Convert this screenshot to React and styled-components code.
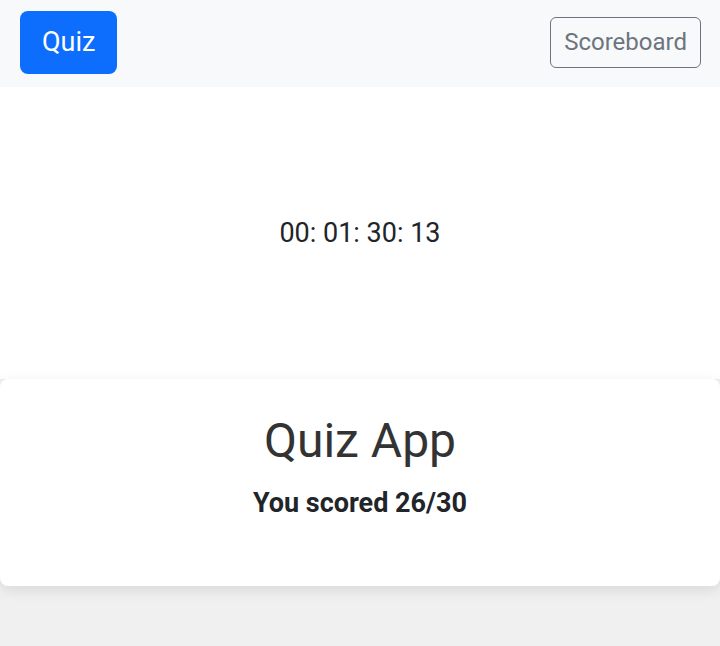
import React from "react";
import styled, { createGlobalStyle } from "styled-components";

const GlobalStyle = createGlobalStyle`
  html, body {
    margin: 0;
    padding: 0;
    background: #f0f0f0;
    font-family: Roboto, "Liberation Sans", sans-serif;
    color: #212529;
  }
  * {
    box-sizing: border-box;
  }
`;

const Navbar = styled.nav`
  display: flex;
  align-items: center;
  justify-content: space-between;
  height: 87px;
  padding: 0 19px 2px 20px;
  background: #f8f9fa;
`;

const Brand = styled.button`
  background: #0d6efd;
  color: #fff;
  border: none;
  border-radius: 8px;
  font-family: inherit;
  font-size: 27px;
  line-height: 39px;
  padding: 12px 22px;
  cursor: pointer;
`;

const OutlineButton = styled.button`
  background: transparent;
  color: #6c757d;
  border: 1px solid #6c757d;
  border-radius: 6px;
  font-family: inherit;
  font-size: 24px;
  line-height: 35px;
  padding: 7px 13px;
  cursor: pointer;
`;

const TimerSection = styled.section`
  display: flex;
  align-items: center;
  justify-content: center;
  height: 292px;
  background: #fff;
`;

const Timer = styled.div`
  font-size: 27px;
  line-height: 32px;
  color: #212529;
`;

const Card = styled.div`
  background: #fff;
  border-radius: 8px;
  box-shadow: 0 4px 14px rgba(0, 0, 0, 0.1);
  padding: 33px 20px 66px;
  text-align: center;
`;

const Title = styled.h1`
  margin: 0 0 16px;
  font-size: 48px;
  line-height: 58px;
  font-weight: 400;
  color: #333;
`;

const Score = styled.h2`
  margin: 0;
  font-size: 27px;
  line-height: 34px;
  font-weight: 700;
  color: #212529;
`;

const Footer = styled.div`
  height: 60px;
`;

const App = () => {
  return (
    <>
      <GlobalStyle />
      <Navbar>
        <Brand>Quiz</Brand>
        <OutlineButton>Scoreboard</OutlineButton>
      </Navbar>
      <TimerSection>
        <Timer>00: 01: 30: 13</Timer>
      </TimerSection>
      <Card>
        <Title>Quiz App</Title>
        <Score>You scored 26/30</Score>
      </Card>
      <Footer />
    </>
  );
};

export default App;
